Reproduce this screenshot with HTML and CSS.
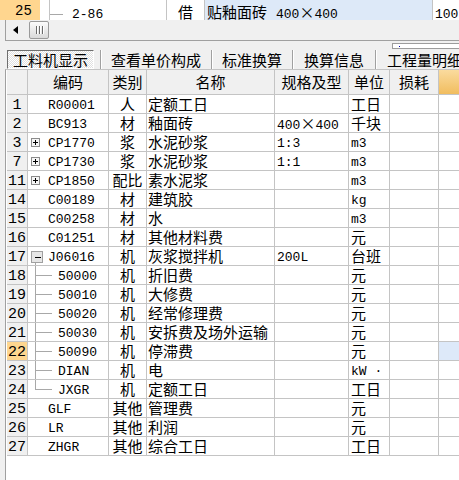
FILE: index.html
```html
<!DOCTYPE html>
<html>
<head>
<meta charset="utf-8">
<link rel="stylesheet" href="styles.css">
</head>
<body>
<div class="toprow">
  <div class="tc tnum">25</div>
  <div class="tc tgap"></div>
  <div class="tc tcode"><span class="hl"></span><span class="lat">2-86</span></div>
  <div class="tc ttype">借</div>
  <div class="tc tname">贴釉面砖<span class="lat sp">400</span><span class="x">×</span><span class="lat">400</span></div>
  <div class="tc tqty"><span class="lat">100</span></div>
</div>
<div class="hscroll">
  <span class="arrow"></span>
  <span class="thumb"><i></i><i></i><i></i></span>
</div>
<div class="tabs">
  <div class="tab active">工料机显示</div>
  <div class="sep first"></div>
  <div class="tab t2">查看单价构成</div>
  <div class="sep"></div>
  <div class="tab t3">标准换算</div>
  <div class="sep"></div>
  <div class="tab t4">换算信息</div>
  <div class="sep"></div>
  <div class="tab t5">工程量明细</div>
</div>
<div class="mini"><span class="dot"></span></div>
<div class="grid">
  <div class="row hdr">
    <div class="c num"></div>
    <div class="c code">编码</div>
    <div class="c type">类别</div>
    <div class="c name">名称</div>
    <div class="c spec">规格及型</div>
    <div class="c unit">单位</div>
    <div class="c loss">损耗</div>
    <div class="c ext hot"></div>
  </div>
  <div class="row"><div class="c num">1</div><div class="c code">R00001</div><div class="c type">人</div><div class="c name">定额工日</div><div class="c spec"></div><div class="c unit">工日</div><div class="c loss"></div><div class="c ext"></div></div>
  <div class="row"><div class="c num">2</div><div class="c code">BC913</div><div class="c type">材</div><div class="c name">釉面砖</div><div class="c spec"><span class="lat">400</span><span class="x">×</span><span class="lat">400</span></div><div class="c unit">千块</div><div class="c loss"></div><div class="c ext"></div></div>
  <div class="row"><div class="c num">3</div><div class="c code"><span class="pbox"></span>CP1770</div><div class="c type">浆</div><div class="c name">水泥砂浆</div><div class="c spec lat">1:3</div><div class="c unit lat">m3</div><div class="c loss"></div><div class="c ext"></div></div>
  <div class="row"><div class="c num">7</div><div class="c code"><span class="pbox"></span>CP1730</div><div class="c type">浆</div><div class="c name">水泥砂浆</div><div class="c spec lat">1:1</div><div class="c unit lat">m3</div><div class="c loss"></div><div class="c ext"></div></div>
  <div class="row"><div class="c num">11</div><div class="c code"><span class="pbox"></span>CP1850</div><div class="c type">配比</div><div class="c name">素水泥浆</div><div class="c spec"></div><div class="c unit lat">m3</div><div class="c loss"></div><div class="c ext"></div></div>
  <div class="row"><div class="c num">14</div><div class="c code">C00189</div><div class="c type">材</div><div class="c name">建筑胶</div><div class="c spec"></div><div class="c unit lat">kg</div><div class="c loss"></div><div class="c ext"></div></div>
  <div class="row"><div class="c num">15</div><div class="c code">C00258</div><div class="c type">材</div><div class="c name">水</div><div class="c spec"></div><div class="c unit lat">m3</div><div class="c loss"></div><div class="c ext"></div></div>
  <div class="row"><div class="c num">16</div><div class="c code">C01251</div><div class="c type">材</div><div class="c name">其他材料费</div><div class="c spec"></div><div class="c unit">元</div><div class="c loss"></div><div class="c ext"></div></div>
  <div class="row"><div class="c num">17</div><div class="c code"><span class="mbox"></span><span class="vl v-start"></span>J06016</div><div class="c type">机</div><div class="c name">灰浆搅拌机</div><div class="c spec lat">200L</div><div class="c unit">台班</div><div class="c loss"></div><div class="c ext"></div></div>
  <div class="row"><div class="c num">18</div><div class="c code ch"><span class="vl"></span><span class="hl2"></span>50000</div><div class="c type">机</div><div class="c name">折旧费</div><div class="c spec"></div><div class="c unit">元</div><div class="c loss"></div><div class="c ext"></div></div>
  <div class="row"><div class="c num">19</div><div class="c code ch"><span class="vl"></span><span class="hl2"></span>50010</div><div class="c type">机</div><div class="c name">大修费</div><div class="c spec"></div><div class="c unit">元</div><div class="c loss"></div><div class="c ext"></div></div>
  <div class="row"><div class="c num">20</div><div class="c code ch"><span class="vl"></span><span class="hl2"></span>50020</div><div class="c type">机</div><div class="c name">经常修理费</div><div class="c spec"></div><div class="c unit">元</div><div class="c loss"></div><div class="c ext"></div></div>
  <div class="row"><div class="c num">21</div><div class="c code ch"><span class="vl"></span><span class="hl2"></span>50030</div><div class="c type">机</div><div class="c name">安拆费及场外运输</div><div class="c spec"></div><div class="c unit">元</div><div class="c loss"></div><div class="c ext"></div></div>
  <div class="row"><div class="c num sel">22</div><div class="c code ch"><span class="vl"></span><span class="hl2"></span>50090</div><div class="c type">机</div><div class="c name">停滞费</div><div class="c spec"></div><div class="c unit">元</div><div class="c loss"></div><div class="c ext cur"></div></div>
  <div class="row"><div class="c num">23</div><div class="c code ch"><span class="vl"></span><span class="hl2"></span>DIAN</div><div class="c type">机</div><div class="c name">电</div><div class="c spec"></div><div class="c unit lat">kW ·</div><div class="c loss"></div><div class="c ext"></div></div>
  <div class="row"><div class="c num">24</div><div class="c code ch"><span class="vl v-end"></span><span class="hl2"></span>JXGR</div><div class="c type">机</div><div class="c name">定额工日</div><div class="c spec"></div><div class="c unit">工日</div><div class="c loss"></div><div class="c ext"></div></div>
  <div class="row"><div class="c num">25</div><div class="c code">GLF</div><div class="c type">其他</div><div class="c name">管理费</div><div class="c spec"></div><div class="c unit">元</div><div class="c loss"></div><div class="c ext"></div></div>
  <div class="row"><div class="c num">26</div><div class="c code">LR</div><div class="c type">其他</div><div class="c name">利润</div><div class="c spec"></div><div class="c unit">元</div><div class="c loss"></div><div class="c ext"></div></div>
  <div class="row"><div class="c num">27</div><div class="c code">ZHGR</div><div class="c type">其他</div><div class="c name">综合工日</div><div class="c spec"></div><div class="c unit">工日</div><div class="c loss"></div><div class="c ext"></div></div>
</div>
</body>
</html>
```
FILE: styles.css
```css
* { box-sizing: border-box; }
html, body { margin: 0; padding: 0; }
body {
  background: #f0f0f0;
  width: 459px;
  height: 480px;
  overflow: hidden;
  position: relative;
  font-family: "Noto Sans CJK SC", sans-serif;
  font-size: 15px;
  color: #000;
}
.lat { font-family: "Liberation Mono", monospace; font-size: 13px; }
.x { display: inline-block; width: 15px; text-align: center; font-size: 15px; }

/* top table row */
.toprow { display: flex; height: 20px; background: #fff; }
.tc {
  flex: none; height: 20px; line-height: 17px; padding-top: 3px;
  border-right: 1px solid #c4c4c4; white-space: nowrap;
}
.tnum { width: 40px; background: #ffd68f; border-right: none; padding-left: 15px;
  font-family: "Liberation Mono", monospace; font-size: 14px; }
.tgap { width: 10px; }
.tcode { width: 117px; position: relative; padding-left: 22px; }
.tcode .hl { position: absolute; left: 0; top: 14px; width: 13px; height: 1px; background: #a8a8a8; }
.ttype { width: 38px; text-align: center; }
.tname { width: 228px; background: #dde9f8; padding-left: 2px; }
.tname .sp { margin-left: 9px; }
.tqty { width: 40px; border-right: none; padding-left: 2px; }

/* horizontal scrollbar */
.hscroll {
  margin-left: 5px; height: 21px;
  border-left: 1px solid #a0a0a0; border-bottom: 1px solid #a0a0a0;
  display: flex; align-items: center;
}
.arrow {
  margin-left: 7px; width: 0; height: 0;
  border-right: 5px solid #000; border-top: 4px solid transparent; border-bottom: 4px solid transparent;
}
.thumb {
  margin-left: 11px; width: 20px; height: 18px;
  border: 1px solid #9a9a9a; border-radius: 2px;
  background: linear-gradient(#fbfbfb, #dadada);
  display: flex; align-items: center; justify-content: center; gap: 2px;
}
.thumb i { display: block; width: 1px; height: 8px; background: #6a6a6a; box-shadow: 1px 0 0 #fff; }

/* tabs */
.tabs { display: flex; height: 19px; margin-top: 9px; }
.tab { flex: none; line-height: 19px; white-space: nowrap; text-align: center; }
.tab.active {
  margin-left: 7px; width: 87px; line-height: 17px;
  border: 1px solid; border-color: #6f6f6f #ffffff #ffffff #6f6f6f;
  background: repeating-conic-gradient(#ffffff 0 25%, #e0e0e0 0 50%) 0 0 / 2px 2px;
}
.sep { flex: none; width: 1px; background: #a0a0a0; box-shadow: 1px 0 0 #fff; }
.sep.first { margin-left: 6px; }
.t2 { width: 110px; }
.t3 { width: 80px; }
.t4 { width: 82px; }
.t5 { padding-left: 11px; text-align: left; }

.mini {
  position: absolute; left: 392px; top: 43px; width: 80px; height: 6px;
  border: 1px solid #9c9c9c; background: #fff;
}
.mini .dot { position: absolute; left: 6px; top: 2px; width: 1px; height: 1px; background: #0000b0; }

/* grid */
.grid {
  margin-left: 5px; height: 411px; overflow: hidden;
  border-left: 1px solid #a0a0a0; border-top: 1px solid #c4c4c4;
  padding-left: 1px; background: #fff;
}
.row { display: flex; height: 19px; width: max-content; border-bottom: 1px solid #c4c4c4; }
.row.hdr { height: 25px; background: #f0f0f0; }
.c {
  flex: none; border-right: 1px solid #c4c4c4; white-space: nowrap;
  line-height: 18px; position: relative;
}
.hdr .c { line-height: 24px; text-align: center; }
.num { width: 21px; background: #f0f0f0; text-align: center;
  font-family: "Liberation Mono", monospace; font-size: 15px; padding-top: 3px; line-height: 15px; }
.num.sel { background: #fed68f; }
.code { width: 81px; padding-left: 20px;
  font-family: "Liberation Mono", monospace; font-size: 13px; padding-top: 3px; line-height: 15px; }
.code.ch { padding-left: 30px; }
.hdr .code { font-family: "Noto Sans CJK SC", sans-serif; font-size: 15px; padding: 0; line-height: 24px; }
.type { width: 38px; text-align: center; }
.name { width: 128px; padding-left: 1px; }
.spec { width: 74px; padding-left: 2px; }
.unit { width: 41px; padding-left: 2px; }
.hdr .spec, .hdr .unit, .hdr .name { padding-left: 0; }
.loss { width: 49px; }
.ext { width: 60px; }
.ext.hot { background: linear-gradient(#fadb9e, #f1bd5f); }
.ext.cur { background: #dde9f9; }
.c.lat { padding-top: 3px; line-height: 15px; }

/* tree widgets */
.pbox {
  position: absolute; left: 3px; top: 5px; width: 9px; height: 9px;
  border: 1px solid #8c8c8c; background: #f6f6f6;
}
.pbox::before { content: ""; position: absolute; left: 1px; top: 3px; width: 5px; height: 1px; background: #000; }
.pbox::after { content: ""; position: absolute; left: 3px; top: 1px; width: 1px; height: 5px; background: #000; }
.mbox {
  position: absolute; left: 3px; top: 4px; width: 12px; height: 12px;
  border: 1px solid #a0a0a0; background: #e6e6e6;
}
.mbox::before { content: ""; position: absolute; left: 3px; top: 5px; width: 6px; height: 1px; background: #000; }
.vl { position: absolute; left: 7px; top: 0; width: 1px; height: 18px; background: #a8a8a8; }
.vl.v-start { top: 16px; height: 2px; }
.vl.v-end { height: 9px; }
.hl2 { position: absolute; left: 7px; top: 9px; width: 17px; height: 1px; background: #a8a8a8; }
```
